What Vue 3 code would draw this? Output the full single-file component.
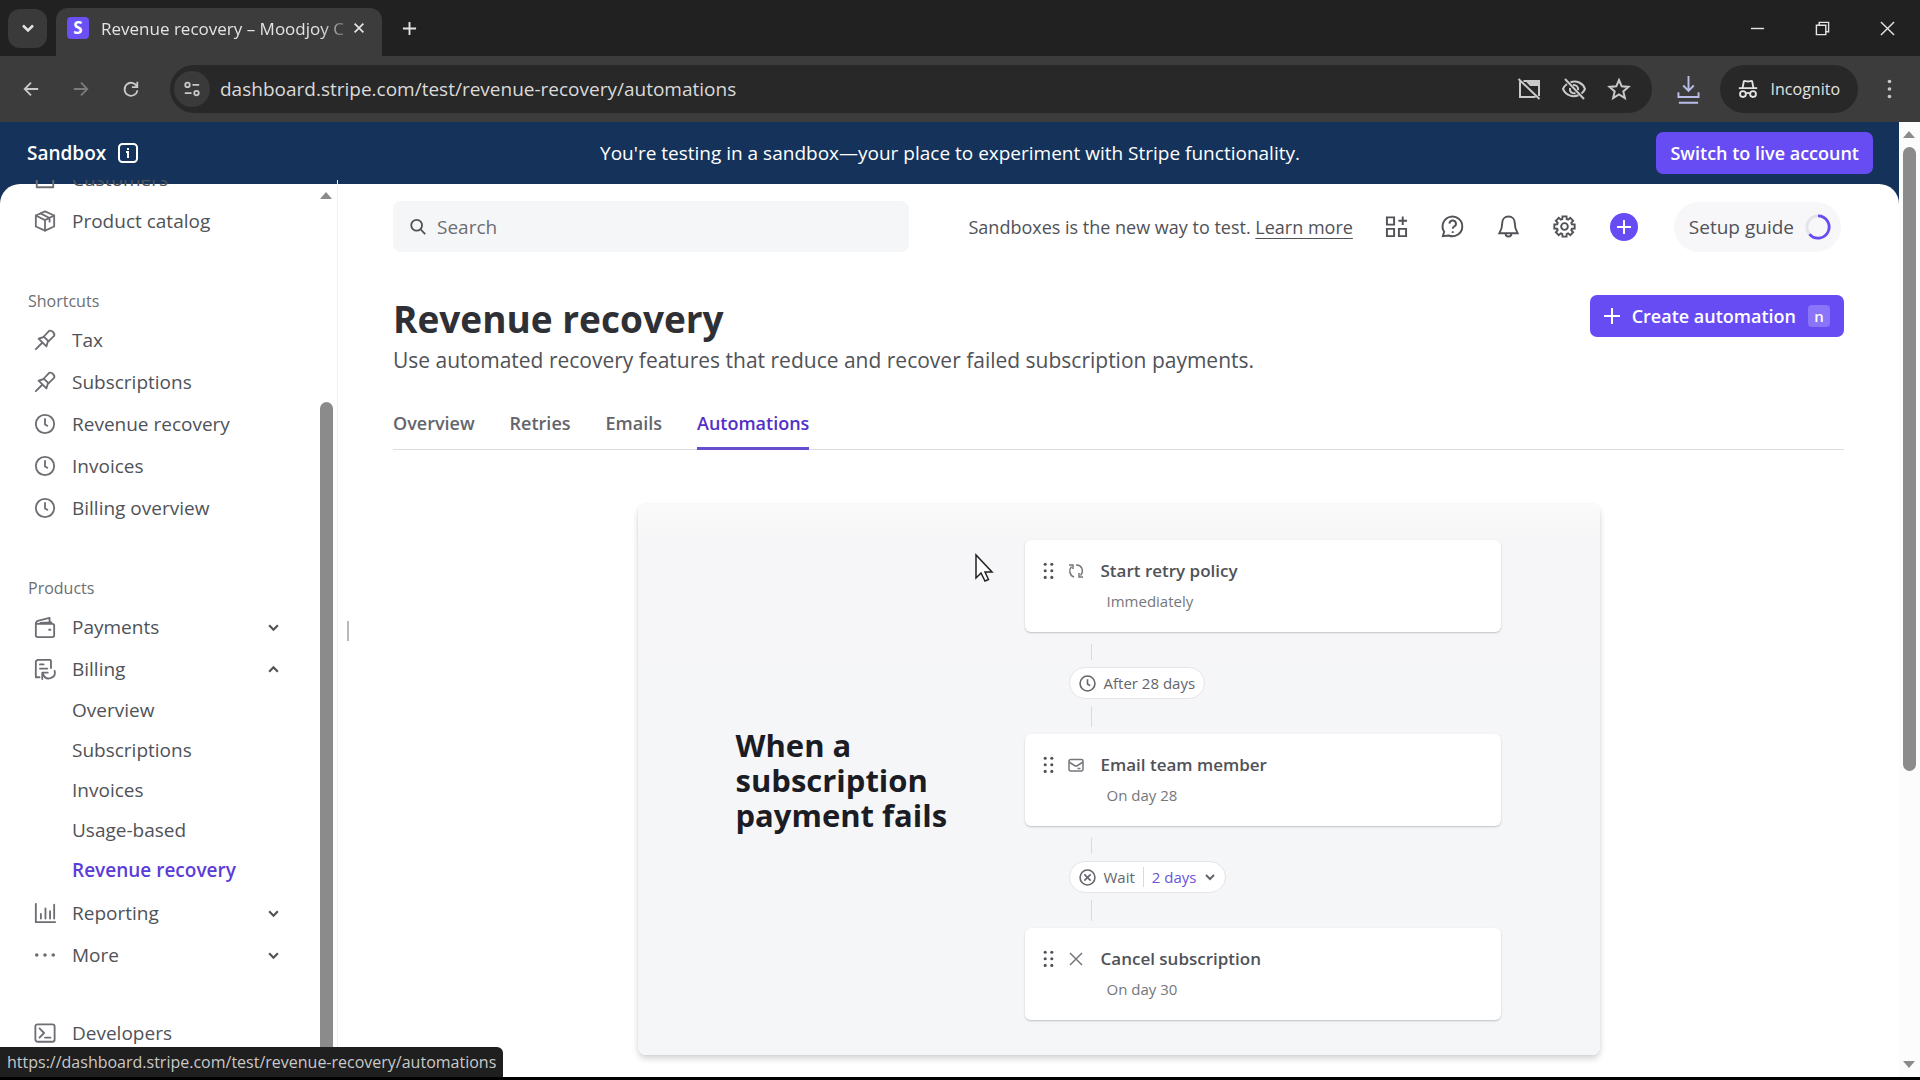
<template>
  <div class="browser">
    <div class="tab-strip">
      <button class="tab-search" aria-label="Search tabs">
        <svg viewBox="0 0 16 16"><path d="M4 6l4 4 4-4" /></svg>
      </button>
      <div class="browser-tab">
        <span class="favicon">S</span>
        <span class="tab-title">Revenue recovery – Moodjoy C</span>
        <button class="tab-close" aria-label="Close tab">
          <svg viewBox="0 0 16 16"><path d="M3 3l10 10M13 3L3 13" /></svg>
        </button>
      </div>
      <button class="new-tab" aria-label="New tab">
        <svg viewBox="0 0 16 16"><path d="M8 1v14M1 8h14" /></svg>
      </button>
      <div class="window-controls">
        <button aria-label="Minimize"><svg viewBox="0 0 16 16"><path d="M1 8h14" /></svg></button>
        <button aria-label="Restore">
          <svg viewBox="0 0 16 16"><path d="M1.5 4.5h10v10h-10zM4.5 4.500v-3h10v10h-3" /></svg>
        </button>
        <button aria-label="Close"><svg viewBox="0 0 16 16"><path d="M1 1l14 14M15 1L1 15" /></svg></button>
      </div>
    </div>

    <div class="toolbar">
      <div class="nav-buttons">
        <button aria-label="Back"><svg viewBox="0 0 20 20"><path d="M18 10H3M10 3l-7 7 7 7" /></svg></button>
        <button class="dim" aria-label="Forward"><svg viewBox="0 0 20 20"><path d="M2 10h15M10 3l7 7-7 7" /></svg></button>
        <button aria-label="Reload">
          <svg viewBox="0 0 20 20"><path d="M16.5 7A7.2 7.2 0 1 0 17.2 11.5M17 2v6h-6" /></svg>
        </button>
      </div>
      <div class="omnibox">
        <button class="site-info" aria-label="Site information">
          <svg viewBox="0 0 20 20"><circle cx="5" cy="5.5" r="2.5" /><path d="M10.5 5.5H18M2 14.5h7.5" /><circle cx="15" cy="14.5" r="2.5" /></svg>
        </button>
        <input class="address" type="text" aria-label="Address" value="dashboard.stripe.com/test/revenue-recovery/automations" />
        <button aria-label="Pop-ups blocked">
          <svg viewBox="0 0 24 24"><path d="M6.5 4H22v15M3 4.500V20h15.500M1.500 2l21 20M13 8h8.500" /><path d="M9 4.500h12.500V9H13z" fill="currentColor" stroke="none" /></svg>
        </button>
        <button aria-label="Third-party cookies blocked">
          <svg viewBox="0 0 24 24"><path d="M8.5 5.3A11 11 0 0 1 23 12a12 12 0 0 1-3.500 4.500M5 7a12 12 0 0 0-4 5c3 6.500 9.500 8.500 15.500 6.300M11 8a4.200 4.200 0 0 1 5 5M8 11a4.200 4.200 0 0 0 5.500 5M3 2l19 20" /></svg>
        </button>
        <button aria-label="Bookmark">
          <svg viewBox="0 0 24 24"><path d="M12 3l2.700 6.300 6.800.6-5.200 4.500 1.600 6.700L12 17.500l-5.900 3.600 1.600-6.700L2.500 9.900l6.800-.6z" /></svg>
        </button>
      </div>
      <button class="downloads" aria-label="Downloads">
        <svg viewBox="0 0 24 30"><path d="M12 1v15M6.500 11l5.500 5.500 5.500-5.500M1.500 18v5h21v-5M2 29h20" /></svg>
      </button>
      <div class="incognito">
        <svg viewBox="0 0 24 24"><path d="M2 11h20M6 11l1.500-7.500c.8-.8 2 .3 4.500.3s3.700-1.100 4.500-.3L18 11" /><circle cx="6.5" cy="17.5" r="3.2" /><circle cx="17.5" cy="17.5" r="3.2" /><path d="M9.700 17c1.500-1 3-1 4.600 0" /></svg>
        <span>Incognito</span>
      </div>
      <button class="menu" aria-label="Menu">
        <svg viewBox="0 0 6 24"><circle cx="3" cy="3" r="2.2" /><circle cx="3" cy="12" r="2.2" /><circle cx="3" cy="21" r="2.2" /></svg>
      </button>
    </div>

    <div class="viewport">
      <div class="page">
        <div class="banner">
          <div class="banner-label">
            Sandbox
            <svg viewBox="0 0 20 20"><rect x="1" y="1" width="18" height="18" rx="3.5" /><path d="M10 5v2M8 9h2v6" /></svg>
          </div>
          <p>You're testing in a sandbox—your place to experiment with Stripe functionality.</p>
          <button class="primary">Switch to live account</button>
        </div>

        <div class="shell">
          <aside class="sidebar">
            <nav class="sidebar-nav">
              <section v-for="section in sections" :key="section.id" class="nav-section">
                <h2 v-if="section.title">{{ section.title }}</h2>
                <template v-for="item in section.items" :key="item.label">
                  <a href="#" class="nav-item">
                    <svg class="nav-icon" viewBox="0 0 24 24"><path v-for="d in icons[item.icon]" :key="d" :d="d" /></svg>
                    <span>{{ item.label }}</span>
                    <svg v-if="item.toggle" class="chevron" :class="{ open: item.children }" viewBox="0 0 12 12"><path d="M2 4l4 4 4-4" /></svg>
                  </a>
                  <div v-if="item.children" class="nav-children">
                    <a v-for="child in item.children" :key="child" href="#" :class="{ active: child === 'Revenue recovery' }">{{ child }}</a>
                  </div>
                </template>
              </section>
            </nav>
            <div class="sidebar-scroll">
              <svg viewBox="0 0 12 8"><path d="M6 0l6 7H0z" /></svg>
              <div class="thumb"></div>
            </div>
          </aside>
          <div class="resizer"></div>

          <main class="main">
            <header class="topbar">
              <label class="search">
                <svg viewBox="0 0 20 20"><circle cx="8.5" cy="8" r="6" /><path d="M12.8 12.5L18 18" /></svg>
                <input type="search" placeholder="Search" aria-label="Search" />
              </label>
              <div class="topbar-right">
                <p>Sandboxes is the new way to test. <a href="#">Learn more</a></p>
                <button class="tool" aria-label="Apps">
                  <svg viewBox="0 0 24 24"><path d="M2 2.500h7.500v7.500H2zM2 14.500h7.500V22H2zM14.500 14.500H22V22h-7.500zM18.500 1.500v9M14 6h9" /></svg>
                </button>
                <button class="tool" aria-label="Help">
                  <svg viewBox="0 0 24 24"><path d="M2 22l1.300-4.500A10.300 10.300 0 1 1 8 21.400L2 22zM8.800 9a3.400 3.400 0 1 1 4.800 3.200c-1 .5-1.400 1-1.400 2.200M12.200 17v1.800" /></svg>
                </button>
                <button class="tool" aria-label="Notifications">
                  <svg viewBox="0 0 24 24"><path d="M12 1.500c-4 0-6.500 3-6.500 6.500 0 6-1 7.500-3 11h19c-2-3.500-3-5-3-11 0-3.500-2.500-6.500-6.500-6.500zM9 19.500c0 4 6 4 6 0" /></svg>
                </button>
                <button class="tool" aria-label="Settings">
                  <svg viewBox="0 0 24 24"><path :d="gearPath" /><circle cx="12" cy="12" r="3.5" /></svg>
                </button>
                <button class="add" aria-label="Create">
                  <svg viewBox="0 0 16 16"><path d="M8 1v14M1 8h14" /></svg>
                </button>
                <button class="setup">
                  Setup guide
                  <svg viewBox="0 0 28 28"><circle class="ring" cx="14" cy="14" r="12" /><path d="M14 2a12 12 0 1 1-9.200 19.700" /></svg>
                </button>
              </div>
            </header>

            <div class="title-row">
              <div>
                <h1>Revenue recovery</h1>
                <p>Use automated recovery features that reduce and recover failed subscription payments.</p>
              </div>
              <button class="primary create">
                <svg viewBox="0 0 16 16"><path d="M8 0v16M0 8h16" /></svg>
                Create automation
                <kbd>n</kbd>
              </button>
            </div>

            <nav class="tabs">
              <a v-for="tab in tabs" :key="tab" href="#" :class="{ active: tab === 'Automations' }">{{ tab }}</a>
            </nav>

            <section class="panel">
              <h2>When a subscription payment fails</h2>
              <div class="flow">
                <template v-for="step in steps" :key="step.title">
                  <article class="step">
                    <svg class="grip" viewBox="0 0 10 16"><circle v-for="n in 6" :key="n" :cx="n % 2 ? 2 : 8" :cy="2 + Math.floor((n - 1) / 2) * 6" r="1.4" /></svg>
                    <svg class="step-icon" viewBox="0 0 16 16"><path v-for="d in icons[step.icon]" :key="d" :d="d" /></svg>
                    <div class="step-text">
                      <h3>{{ step.title }}</h3>
                      <p>{{ step.when }}</p>
                    </div>
                  </article>
                  <div v-if="step.next" class="link">
                    <div class="delay">
                      <svg viewBox="0 0 16 16"><circle cx="8" cy="8" r="7" /><path :d="step.next.delay ? 'M5 5l6 6M11 5l-6 6' : 'M8 4v4.500l2.500 1.500'" /></svg>
                      <span>{{ step.next.label }}</span>
                      <div v-if="step.next.delay" class="delay-pick">
                        <select aria-label="Wait time"><option>{{ step.next.delay }}</option></select>
                        <svg viewBox="0 0 12 12"><path d="M2 4l4 4 4-4" /></svg>
                      </div>
                    </div>
                  </div>
                </template>
              </div>
            </section>
          </main>
        </div>
      </div>

      <div class="page-scroll">
        <svg viewBox="0 0 12 8"><path d="M6 0l6 7H0z" /></svg>
        <div class="track"><div class="thumb"></div></div>
        <svg viewBox="0 0 12 8"><path d="M0 1h12L6 8z" /></svg>
      </div>
      <div class="status">https://dashboard.stripe.com/test/revenue-recovery/automations</div>
    </div>

    <svg class="cursor" viewBox="0 0 18 28"><path d="M1 1v23l5-5 4 8 3.500-1.500L10 18h7z" /></svg>
  </div>
</template>

<script setup>
const tabs = ['Overview', 'Retries', 'Emails', 'Automations']

const sections = [
  {
    id: 'main',
    items: [
      { label: 'Customers', icon: 'customers' },
      { label: 'Product catalog', icon: 'box' },
    ],
  },
  {
    id: 'shortcuts',
    title: 'Shortcuts',
    items: [
      { label: 'Tax', icon: 'pin' },
      { label: 'Subscriptions', icon: 'pin' },
      { label: 'Revenue recovery', icon: 'clock' },
      { label: 'Invoices', icon: 'clock' },
      { label: 'Billing overview', icon: 'clock' },
    ],
  },
  {
    id: 'products',
    title: 'Products',
    items: [
      { label: 'Payments', icon: 'wallet', toggle: true },
      {
        label: 'Billing',
        icon: 'billing',
        toggle: true,
        children: ['Overview', 'Subscriptions', 'Invoices', 'Usage-based', 'Revenue recovery'],
      },
      { label: 'Reporting', icon: 'chart', toggle: true },
      { label: 'More', icon: 'more', toggle: true },
    ],
  },
  { id: 'dev', items: [{ label: 'Developers', icon: 'terminal' }] },
]

const steps = [
  { title: 'Start retry policy', when: 'Immediately', icon: 'retry', next: { label: 'After 28 days' } },
  { title: 'Email team member', when: 'On day 28', icon: 'mail', next: { label: 'Wait', delay: '2 days' } },
  { title: 'Cancel subscription', when: 'On day 30', icon: 'cross' },
]

const icons = {
  customers: ['M3 4h18v17H3z'],
  box: ['M12 1.500l10 4.500v12l-10 4.500L2 18V6z', 'M2 6l10 5 10-5M12 11v11.500M7 3.700l10 5v4'],
  pin: ['M2 22l7-7', 'M5 10.500l8.500 8.500 1.500-5 7-6.500c1-3-2.500-6.500-5.500-5.500L10 9z', 'M11 8.500l5 5'],
  clock: ['M12 2a10 10 0 1 1 0 20 10 10 0 0 1 0-20z', 'M12 6.500v6l2.500 1.500'],
  wallet: ['M2 8.500h18a2 2 0 0 1 2 2V21a2 2 0 0 1-2 2H4a2 2 0 0 1-2-2zM2 8.500c0-2 1-3 3-3.500l12-3v6.500M7 7.500l12-.500', 'M16.500 15h1.500'],
  billing: ['M6 21H2V3.500L4 2h13.500a1 1 0 0 1 1 1v8', 'M6.500 7h4M6.500 11.500h8', 'M9 23v-7h6M9.500 16.500c1.500 5 5 6.500 8.500 5.500 4-1.200 5.500-4.500 4.500-8'],
  chart: ['M2 2v20h21', 'M7.500 13v5M12.500 7v11M17.500 10v8M22 3v15'],
  more: ['M2 12a1 1 0 1 0 2 0 1 1 0 1 0-2 0', 'M11 12a1 1 0 1 0 2 0 1 1 0 1 0-2 0', 'M20 12a1 1 0 1 0 2 0 1 1 0 1 0-2 0'],
  terminal: ['M4 2.500h16a2.500 2.500 0 0 1 2.500 2.500v14a2.500 2.500 0 0 1-2.500 2.500H4A2.500 2.500 0 0 1 1.500 19V5A2.500 2.500 0 0 1 4 2.500z', 'M6 7l5 5-5 5M12 17h6'],
  retry: ['M6 14C1.500 12.500 .5 7 3.500 3.500M1 2h4v4', 'M8 2c5.500-.5 8.500 5.500 4.500 10.500M15 14h-4v-4'],
  mail: ['M2.500 2.500h11A1.500 1.500 0 0 1 15 4v8.500a1.500 1.500 0 0 1-1.500 1.500h-11A1.500 1.500 0 0 1 1 12.500V4a1.500 1.500 0 0 1 1.500-1.500z', 'M1 5l5.500 3.500c1 .6 2 .6 3 0L15 5M9.500 11.500h3'],
  cross: ['M2 2l12 12M14 2L2 14'],
}

// eight-tooth gear outline around (12, 12)
const gearPath = (() => {
  const points = []
  for (let i = 0; i < 8; i++) {
    for (const [offset, radius] of [[-17, 8], [-11, 10.8], [11, 10.8], [17, 8]]) {
      const a = ((i * 45 + offset) * Math.PI) / 180
      points.push(`${(12 + radius * Math.cos(a)).toFixed(1)} ${(12 + radius * Math.sin(a)).toFixed(1)}`)
    }
  }
  return `M${points.join('L')}Z`
})()
</script>

<style>
body {
  background: #000;
}
</style>

<style scoped>
.browser {
  display: flex;
  flex-direction: column;
  height: 100vh;
  padding-bottom: 3px;
  box-sizing: border-box;
  overflow: hidden;
  background: #000;
  color: #505257;
  font-family: "Open Sans", "Noto Sans", sans-serif;
  font-size: 19px;
}

.browser * {
  box-sizing: border-box;
}

h1, h2, h3, p {
  margin: 0;
}

a {
  color: inherit;
  text-decoration: none;
}

button {
  display: inline-flex;
  align-items: center;
  justify-content: center;
  padding: 0;
  border: 0;
  background: none;
  color: inherit;
  font: inherit;
  white-space: nowrap;
  cursor: pointer;
}

input, select {
  min-width: 0;
  padding: 0;
  border: 0;
  outline: 0;
  background: none;
  color: inherit;
  font: inherit;
}

svg {
  flex: none;
  overflow: visible;
  fill: none;
  stroke: currentColor;
  stroke-width: 2;
}

/* TAB STRIP */
.tab-strip {
  display: flex;
  flex: none;
  align-items: center;
  height: 56px;
  padding-left: 8px;
  background: #212121;
  color: #e3e3e3;
}

.tab-search {
  width: 39px;
  height: 39px;
  border-radius: 12px;
  background: #3a3a3a;
}

.tab-search svg {
  width: 20px;
}

.browser-tab {
  display: flex;
  align-items: center;
  align-self: flex-end;
  width: 326px;
  height: 48px;
  margin-left: 9px;
  padding: 0 13px 8px 11px;
  border-radius: 12px 12px 0 0;
  background: #3c3c3c;
}

.favicon {
  width: 22px;
  height: 22px;
  border-radius: 4px;
  background: #6a50f5;
  color: #fff;
  font-size: 17px;
  font-weight: 700;
  line-height: 22px;
  text-align: center;
}

.tab-title {
  flex: 1;
  margin-left: 12px;
  overflow: hidden;
  font-size: 17px;
  white-space: nowrap;
  mask-image: linear-gradient(to right, #000 90%, rgba(0, 0, 0, 0.3) 100%);
}

.tab-close {
  width: 20px;
  margin-left: 4px;
}

.tab-close svg {
  width: 14px;
}

.new-tab {
  margin-left: 20px;
}

.new-tab svg {
  width: 15px;
}

.window-controls {
  display: flex;
  margin-left: auto;
}

.window-controls button {
  width: 65px;
}

.window-controls svg {
  width: 15px;
  stroke-width: 1.5;
}

/* TOOLBAR */
.toolbar {
  display: flex;
  flex: none;
  align-items: center;
  height: 66px;
  padding: 0 16px 0 6px;
  background: #3c3c3c;
  color: #c9c9c9;
}

.nav-buttons {
  display: flex;
}

.nav-buttons button {
  width: 50px;
}

.nav-buttons svg {
  width: 18px;
}

.dim {
  color: #7c7c7c;
}

.omnibox {
  display: flex;
  flex: 1;
  align-items: center;
  gap: 21px;
  height: 48px;
  margin-left: 14px;
  padding: 0 21px 0 4px;
  border-radius: 24px;
  background: #282828;
}

.omnibox svg {
  width: 24px;
}

.site-info {
  width: 36px;
  height: 36px;
  border-radius: 50%;
  background: #3a3a3a;
}

.omnibox .site-info svg {
  width: 18px;
}

.address {
  flex: 1;
  margin-left: -11px;
  color: #dadada;
}

.downloads {
  margin: 0 20px 0 25px;
  color: #b9bde8;
}

.downloads svg {
  width: 23px;
}

.incognito {
  display: flex;
  align-items: center;
  gap: 12px;
  height: 48px;
  padding: 0 18px 0 17px;
  border-radius: 24px;
  background: #282828;
  color: #e3e3e3;
  font-size: 16px;
}

.incognito svg {
  width: 22px;
}

.menu {
  width: 30px;
  margin-left: 16px;
}

.menu svg {
  width: 5px;
  fill: currentColor;
  stroke: none;
}

/* VIEWPORT */
.viewport {
  position: relative;
  display: flex;
  flex: 1;
  min-height: 0;
}

.page {
  display: flex;
  flex: 1;
  flex-direction: column;
  min-width: 0;
  background: #14325a;
}

.banner {
  display: grid;
  flex: none;
  grid-template-columns: 1fr auto 1fr;
  align-items: center;
  height: 62px;
  padding: 0 26px 0 27px;
  color: #fff;
}

.banner-label {
  display: flex;
  align-items: center;
  gap: 12px;
  font-weight: 600;
}

.banner-label svg {
  width: 20px;
}

.primary {
  height: 42px;
  padding: 0 14px;
  border-radius: 7px;
  background: #674cf4;
  color: #fff;
  font-size: 18px;
  font-weight: 600;
}

.banner .primary {
  justify-self: end;
}

.shell {
  display: flex;
  flex: 1;
  min-height: 0;
  border-radius: 20px 20px 0 0;
  background: #fff;
}

/* SIDEBAR */
.sidebar {
  display: flex;
  flex: none;
  width: 338px;
  margin-top: -4px;
  overflow: hidden;
}

.sidebar-nav {
  flex: 1;
  margin-top: -22px;
  padding-left: 28px;
}

.nav-section {
  margin-bottom: 36px;
}

.nav-section h2 {
  padding-top: 5px;
  color: #6c6e73;
  font-size: 16px;
  font-weight: 400;
  line-height: 36px;
}

.nav-item {
  display: flex;
  align-items: center;
  height: 42px;
  padding: 0 39px 0 6px;
}

.nav-icon {
  width: 22px;
  margin-right: 16px;
  color: #6c6e73;
  stroke-linecap: round;
  stroke-linejoin: round;
}

.chevron {
  width: 13px;
  margin-left: auto;
}

.chevron.open {
  transform: rotate(180deg);
}

.nav-children {
  padding-bottom: 2px;
}

.nav-children a {
  display: block;
  padding-left: 44px;
  line-height: 40px;
}

.nav-children .active {
  color: #5b3cd8;
  font-weight: 600;
}

.sidebar-scroll {
  display: flex;
  flex-direction: column;
  align-items: center;
  gap: 202px;
  width: 19px;
  padding: 12px 5px 0 1px;
  border-right: 1px solid #f1f1f1;
}

.sidebar-scroll svg,
.page-scroll svg {
  width: 12px;
  fill: #8b8b8b;
  stroke: none;
}

.thumb {
  width: 13px;
  border-radius: 7px;
  background: #8b8b8b;
}

.sidebar-scroll .thumb {
  flex: 1;
  border-radius: 7px 7px 0 0;
}

.resizer {
  align-self: center;
  width: 2px;
  height: 20px;
  margin-left: 9px;
  background: #b9b9bc;
}

/* MAIN */
.main {
  flex: 1;
  min-width: 0;
  margin-left: 44px;
  padding: 17px 55px 0 0;
  overflow: hidden;
}

.topbar {
  display: flex;
  align-items: center;
  justify-content: space-between;
  gap: 46px;
  height: 51px;
  padding-right: 3px;
}

.search {
  display: flex;
  flex: 0 1 516px;
  align-items: center;
  gap: 10px;
  height: 51px;
  padding: 0 16px;
  border-radius: 8px;
  background: #f5f6f8;
}

.search svg {
  width: 18px;
}

.search input {
  flex: 1;
}

.search input::placeholder {
  color: #6c6e73;
  opacity: 1;
}

.topbar-right {
  display: flex;
  align-items: center;
}

.topbar-right p {
  margin-right: 16px;
  font-size: 18px;
  white-space: nowrap;
}

.topbar-right p a {
  text-decoration: underline;
  text-underline-offset: 4px;
}

.tool {
  width: 56px;
}

.tool svg {
  width: 23px;
}

.add {
  width: 28px;
  height: 28px;
  margin: 0 36px 0 17px;
  border-radius: 50%;
  background: #674cf4;
  color: #fff;
}

.add svg {
  width: 16px;
}

.setup {
  gap: 11px;
  height: 50px;
  padding: 0 10px 0 15px;
  border-radius: 25px;
  background: #f7f7fa;
}

.setup svg {
  width: 26px;
  color: #674cf4;
  stroke-width: 3;
}

.setup .ring {
  stroke: #e3e3ea;
}

.title-row {
  display: flex;
  align-items: flex-start;
  justify-content: space-between;
  margin-top: 43px;
}

h1 {
  color: #2f3035;
  font-size: 37px;
  font-weight: 700;
  line-height: 48px;
}

.title-row p {
  font-size: 21px;
  line-height: 34px;
}

.create {
  gap: 12px;
}

.create svg {
  width: 16px;
}

kbd {
  width: 22px;
  height: 22px;
  border-radius: 4px;
  background: #8a75f8;
  font-family: inherit;
  font-size: 15px;
  line-height: 22px;
}

.tabs {
  display: flex;
  gap: 35px;
  margin-top: 19px;
  border-bottom: 1px solid #dcdde1;
  font-size: 18px;
  font-weight: 600;
}

.tabs a {
  height: 54px;
  margin-bottom: -1px;
  color: #63656b;
  line-height: 54px;
}

.tabs .active {
  border-bottom: 3px solid #674cd0;
  color: #5230c8;
}

/* AUTOMATION PREVIEW */
.panel {
  display: flex;
  align-items: center;
  justify-content: space-between;
  max-width: 962px;
  margin: 54px auto 0;
  padding: 36px 99px 35px 98px;
  border-radius: 8px;
  background: linear-gradient(#fafafa, #f6f6f8 40px, #f5f6f8);
  box-shadow: 0 4px 6px rgba(0, 0, 0, 0.16), 0 0 3px rgba(0, 0, 0, 0.05);
}

.panel h2 {
  max-width: 240px;
  color: #1b1c24;
  font-size: 31px;
  font-weight: 700;
  line-height: 35px;
}

.flow {
  flex: none;
  width: 476px;
}

.step {
  display: flex;
  align-items: flex-start;
  height: 92px;
  padding: 17px 17px 0;
  border-radius: 6px;
  background: #fff;
  box-shadow: 0 1px 2px rgba(0, 0, 0, 0.22);
}

.grip {
  width: 11px;
  margin: 5px 14px 0 1px;
  fill: #505257;
  stroke: none;
}

.step-icon {
  width: 16px;
  margin: 6px 17px 0 0;
  color: #75777c;
  stroke-width: 1.5;
}

.step h3 {
  font-size: 17px;
  font-weight: 600;
  line-height: 28px;
}

.step p {
  margin: 3px 0 0 6px;
  color: #75777c;
  font-size: 15px;
  line-height: 26px;
}

.link {
  display: flex;
  flex-direction: column;
  align-items: flex-start;
  gap: 7px;
  height: 102px;
  padding: 12px 0 7px 44px;
}

.link::before,
.link::after {
  content: '';
  width: 1px;
  margin-left: 22px;
  background: #d9dadf;
}

.link::before {
  height: 16px;
}

.link::after {
  flex: 1;
}

.delay {
  display: flex;
  align-items: center;
  gap: 8px;
  height: 32px;
  padding: 0 9px;
  border: 1px solid #e4e5e9;
  border-radius: 16px;
  background: #fff;
  color: #63656b;
  font-size: 15px;
}

.delay svg {
  width: 17px;
  stroke-width: 1.5;
}

.delay-pick {
  display: flex;
  align-items: center;
  gap: 7px;
  padding-left: 8px;
  border-left: 1px solid #d9dadf;
  color: #6a55d8;
}

.delay-pick select {
  appearance: none;
}

.delay-pick svg {
  width: 12px;
  color: #63656b;
  stroke-width: 2;
}

/* PAGE SCROLLBAR */
.page-scroll {
  display: flex;
  flex-direction: column;
  align-items: center;
  gap: 8px;
  width: 21px;
  padding: 9px 1px 9px 0;
  background: #fcfcfc;
}

.page-scroll .track {
  flex: 1;
}

.page-scroll .thumb {
  height: 69%;
}

.status {
  position: absolute;
  bottom: 0;
  left: 0;
  height: 30px;
  padding: 0 7px;
  border-radius: 0 6px 0 0;
  background: #1f1f1f;
  color: #c9c9c9;
  font-size: 16px;
  line-height: 30px;
}

.cursor {
  position: absolute;
  top: 554px;
  left: 975px;
  width: 18px;
  fill: #fff;
  stroke: #222;
  stroke-width: 1.5;
}
</style>
